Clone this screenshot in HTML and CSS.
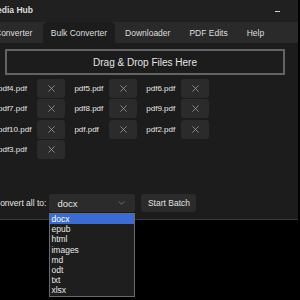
FILE: index.html
```html
<!DOCTYPE html>
<html lang="en">
<head>
  <meta charset="UTF-8" />
  <title>Media Hub</title>
  <link rel="stylesheet" href="styles.css">
</head>
<body>
  <div class="app">
    <div class="titlebar">
      <span class="title">Media Hub</span>
      <span class="min"></span>
    </div>

    <div class="tabs">
      <div class="tab">Converter</div>
      <div class="tab active">Bulk Converter</div>
      <div class="tab">Downloader</div>
      <div class="tab">PDF Edits</div>
      <div class="tab">Help</div>
    </div>

    <div class="content">
      <div class="dropzone">Drag &amp; Drop Files Here</div>

      <div class="files">
        <span class="fname">pdf4.pdf</span><button class="rm"><svg viewBox="0 0 8 8"><path d="M0.5 0.5L7.5 7.5M7.5 0.5L0.5 7.5"/></svg></button>
        <span class="fname">pdf5.pdf</span><button class="rm"><svg viewBox="0 0 8 8"><path d="M0.5 0.5L7.5 7.5M7.5 0.5L0.5 7.5"/></svg></button>
        <span class="fname">pdf6.pdf</span><button class="rm"><svg viewBox="0 0 8 8"><path d="M0.5 0.5L7.5 7.5M7.5 0.5L0.5 7.5"/></svg></button>

        <span class="fname">pdf7.pdf</span><button class="rm"><svg viewBox="0 0 8 8"><path d="M0.5 0.5L7.5 7.5M7.5 0.5L0.5 7.5"/></svg></button>
        <span class="fname">pdf8.pdf</span><button class="rm"><svg viewBox="0 0 8 8"><path d="M0.5 0.5L7.5 7.5M7.5 0.5L0.5 7.5"/></svg></button>
        <span class="fname">pdf9.pdf</span><button class="rm"><svg viewBox="0 0 8 8"><path d="M0.5 0.5L7.5 7.5M7.5 0.5L0.5 7.5"/></svg></button>

        <span class="fname">pdf10.pdf</span><button class="rm"><svg viewBox="0 0 8 8"><path d="M0.5 0.5L7.5 7.5M7.5 0.5L0.5 7.5"/></svg></button>
        <span class="fname">pdf.pdf</span><button class="rm"><svg viewBox="0 0 8 8"><path d="M0.5 0.5L7.5 7.5M7.5 0.5L0.5 7.5"/></svg></button>
        <span class="fname">pdf2.pdf</span><button class="rm"><svg viewBox="0 0 8 8"><path d="M0.5 0.5L7.5 7.5M7.5 0.5L0.5 7.5"/></svg></button>

        <span class="fname">pdf3.pdf</span><button class="rm"><svg viewBox="0 0 8 8"><path d="M0.5 0.5L7.5 7.5M7.5 0.5L0.5 7.5"/></svg></button>
      </div>

      <div class="batch">
        <span class="batch-label">Convert all to:</span>
        <div class="combo">
          <span>docx</span>
          <svg class="chev" viewBox="0 0 8 5"><path d="M0.5 0.5L4 4L7.5 0.5"/></svg>
          <ul class="options">
            <li class="sel">docx</li>
            <li>epub</li>
            <li>html</li>
            <li>images</li>
            <li>md</li>
            <li>odt</li>
            <li>txt</li>
            <li>xlsx</li>
          </ul>
        </div>
        <button class="start">Start Batch</button>
      </div>
    </div>
  </div>
</body>
</html>
```

FILE: styles.css
```css
body {
  margin: 0;
  background: #000;
  font-family: 'Liberation Sans', Arial, sans-serif;
  font-size: 8px;
  color: #e6e6e6;
  height: 300px;
  overflow: hidden;
}

.app {
  width: 306px;
  margin-left: -8px;
  border-bottom: 1px solid #3a3a3a;
}

.titlebar {
  height: 22px;
  background: #202020;
  display: flex;
  align-items: center;
  justify-content: space-between;
  padding: 0 18px 0 0;
}

.title {
  font-weight: bold;
  font-size: 8.5px;
  color: #dcdcdc;
  margin-top: -2px;
  margin-left: -2px;
}

.min {
  width: 5px;
  height: 1px;
  background: #cfcfcf;
}

.tabs {
  height: 21px;
  background: #2a2a2a;
  display: flex;
  align-items: stretch;
  gap: 1px;
}

.tab {
  padding: 0 9px;
  display: flex;
  align-items: center;
  color: #dedede;
  border-radius: 5px 5px 0 0;
  font-size: 8.5px;
}

.tab:first-child {
  padding-left: 0;
  padding-right: 9.5px;
  margin-left: 3px;
}

.tab.active {
  background: #1c1c1c;
  padding: 0 8px;
}

.content {
  background: #1c1c1c;
  height: 170px;
  padding: 6px 0 0 6px;
  position: relative;
}

.dropzone {
  margin: 0 13px 0 7px;
  height: 22px;
  border: 2px solid #636363;
  display: flex;
  align-items: center;
  justify-content: center;
  font-size: 10px;
  color: #e4e4e4;
}

.files {
  margin-top: 4px;
  display: grid;
  grid-template-columns: auto 37px auto 37px auto 28px;
  grid-auto-rows: 19px;
  row-gap: 1.4px;
  justify-content: start;
  align-items: center;
}

.fname {
  padding-right: 6px;
}

.rm {
  width: 28px;
  height: 19px;
  padding: 0;
  border: none;
  border-radius: 3px;
  background: #2b2b2b;
  display: flex;
  align-items: center;
  justify-content: center;
}

.rm svg {
  width: 7px;
  height: 7px;
  stroke: #a0a0a0;
  stroke-width: 0.9;
  fill: none;
}

.batch {
  position: absolute;
  left: 2px;
  top: 151px;
  display: flex;
  align-items: center;
  gap: 3px;
}

.batch-label {
  font-size: 8.5px;
}

.combo {
  position: relative;
  width: 86px;
  height: 18px;
  background: #2b2b2b;
  border-radius: 3px;
  display: flex;
  align-items: center;
  justify-content: space-between;
  padding: 0 10px 0 8px;
  box-sizing: border-box;
  font-size: 9.5px;
}

.chev {
  width: 7px;
  height: 4px;
  stroke: #8a8a8a;
  stroke-width: 0.9;
  fill: none;
}

.options {
  position: absolute;
  left: 0;
  top: 19px;
  width: 84px;
  margin: 0;
  padding: 0;
  list-style: none;
  background: #1e1e1e;
  border: 1px solid #6a6a6a;
  font-size: 8.5px;
  line-height: 10.2px;
}

.options li {
  padding-left: 1px;
}

.options .sel {
  background: #3a6cd6;
  color: #fff;
}

.start {
  width: 55px;
  height: 18px;
  margin-left: 3px;
  border: none;
  border-radius: 3px;
  background: #2b2b2b;
  color: #e0e0e0;
  font-family: inherit;
  font-size: 8.5px;
  padding: 0;
}
```
